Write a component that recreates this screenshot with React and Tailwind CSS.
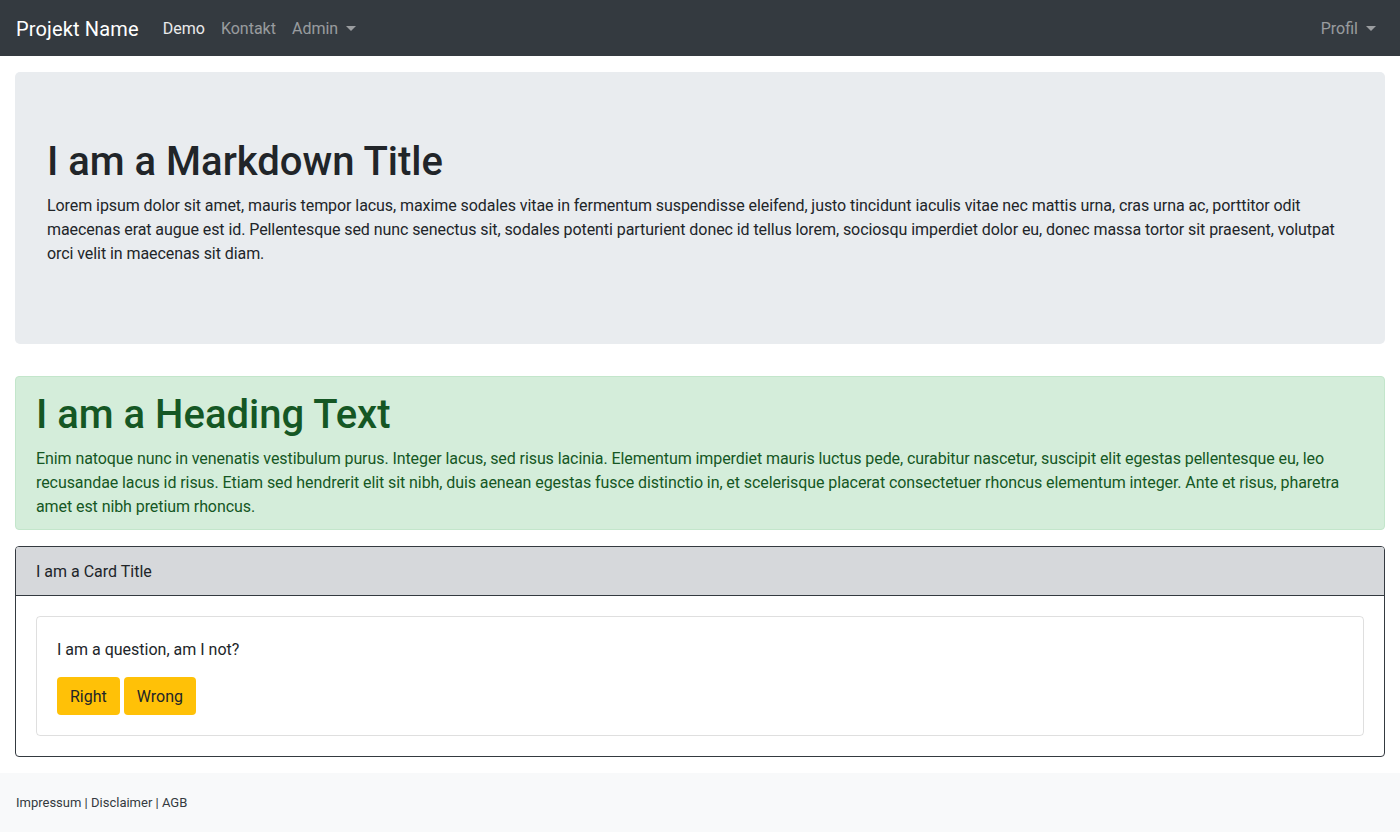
import React from 'react';

// small dropdown caret like bootstrap's
const Caret = () => (
  <span className="ml-[8px] inline-block align-[3px] border-x-[5px] border-t-[5px] border-x-transparent border-t-current" />
);

const Navbar = () => (
  <nav className="h-14 bg-[#343a40] flex items-center px-4 pt-[2px]">
    <a className="text-[20px] leading-[30px] tracking-[0.15px] text-white mr-4 py-[5px]">Projekt Name</a>
    <div className="flex items-center text-[16px] leading-6">
      <a className="px-2 py-2 text-white/90">Demo</a>
      <a className="px-2 py-2 text-white/50">Kontakt</a>
      <a className="px-2 py-2 text-white/50">Admin<Caret /></a>
    </div>
    <div className="ml-auto flex items-center text-[16px] leading-6">
      <a className="px-2 py-2 text-white/50">Profil<Caret /></a>
    </div>
  </nav>
);

export default function App() {
  return (
    <div className="min-h-screen bg-white text-[#212529] text-[16px] leading-6" style={{ fontFamily: 'Roboto, "Liberation Sans", sans-serif' }}>
      <Navbar />

      <main className="px-[15px] pt-4">
        {/* jumbotron */}
        <section className="bg-[#e9ecef] rounded-[5px] px-8 pt-[66px] pb-[62px] mb-8">
          <h1 className="text-[40px] leading-[48px] font-medium mb-2">I am a Markdown Title</h1>
          <p className="mb-4 tracking-[-0.07px]">
            Lorem ipsum dolor sit amet, mauris tempor lacus, maxime sodales vitae in fermentum suspendisse eleifend, justo tincidunt iaculis vitae nec mattis urna, cras urna ac, porttitor odit maecenas erat augue est id. Pellentesque sed nunc senectus sit, sodales potenti parturient donec id tellus lorem, sociosqu imperdiet dolor eu, donec massa tortor sit praesent, volutpat orci velit in maecenas sit diam.
          </p>
        </section>

        {/* alert */}
        <section className="bg-[#d4edda] border border-[#c3e6cb] text-[#155724] rounded-[4px] px-5 pt-[14px] pb-[10px] mb-4">
          <h1 className="text-[40px] leading-[48px] font-medium mb-2">I am a Heading Text</h1>
          <p className="tracking-[-0.08px]">
            Enim natoque nunc in venenatis vestibulum purus. Integer lacus, sed risus lacinia. Elementum imperdiet mauris luctus pede, curabitur nascetur, suscipit elit egestas pellentesque eu, leo recusandae lacus id risus. Etiam sed hendrerit elit sit nibh, duis aenean egestas fusce distinctio in, et scelerisque placerat consectetuer rhoncus elementum integer. Ante et risus, pharetra amet est nibh pretium rhoncus.
          </p>
        </section>

        {/* card */}
        <section className="border border-[#343a40] rounded-[4px] overflow-hidden">
          <div className="bg-[#d6d8db] border-b border-[#343a40] px-5 pt-[13px] pb-[11px]">I am a Card Title</div>
          <div className="p-5">
            <div className="border border-black/[0.125] rounded-[4px] px-5 pt-[21px] pb-[20px]">
              <p className="mb-[15px]">I am a question, am I not?</p>
              <div className="flex gap-1">
                <button className="bg-[#ffc107] text-[#212529] rounded-[4px] px-[13px] pt-[8px] pb-[6px] leading-6">Right</button>
                <button className="bg-[#ffc107] text-[#212529] rounded-[4px] px-[13px] pt-[8px] pb-[6px] leading-6">Wrong</button>
              </div>
            </div>
          </div>
        </section>
      </main>

      <footer className="mt-4 bg-[#f8f9fa] px-4 py-5 text-[13px] leading-[19px] text-[#343a40]">
        Impressum | Disclaimer | AGB
      </footer>
    </div>
  );
}
